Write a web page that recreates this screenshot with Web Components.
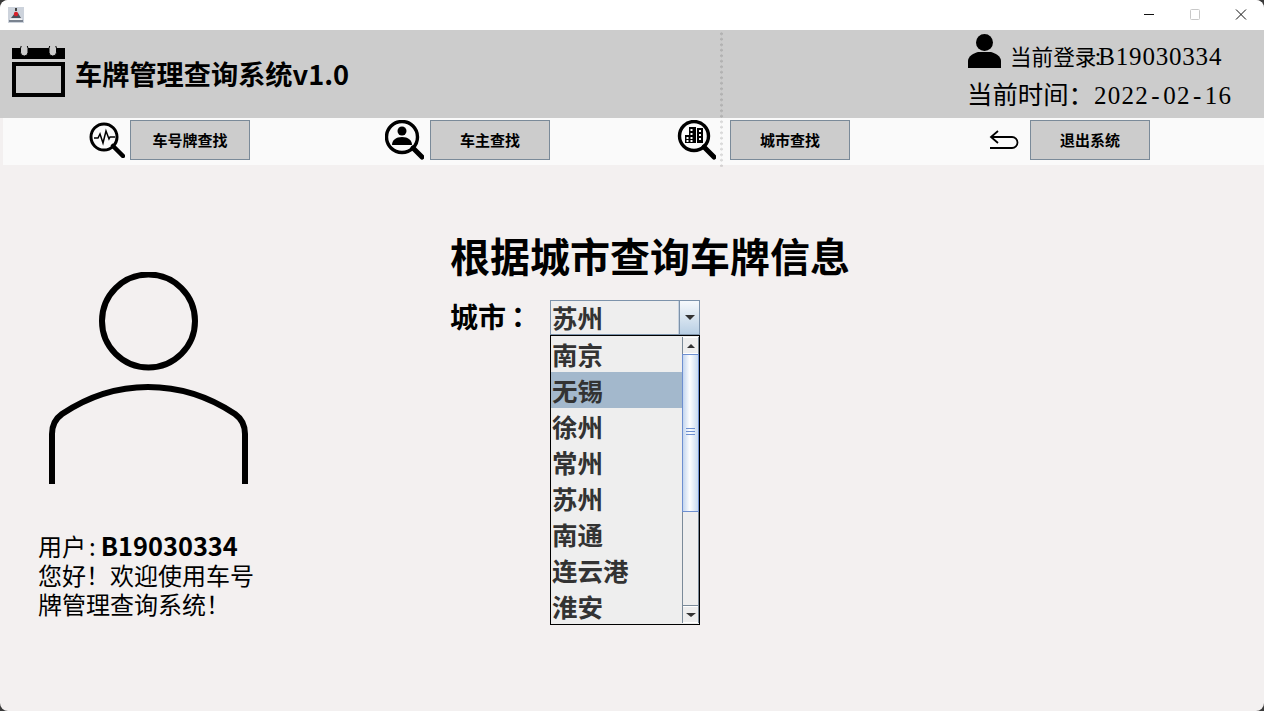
<!DOCTYPE html>
<html lang="zh">
<head>
<meta charset="utf-8">
<style>
  html, body { margin: 0; height: 100%; background: #3a3a3a; }
  body { font-family: "Noto Sans CJK SC", sans-serif; overflow: hidden; }
  plate-app { height: 711px; }
</style>
</head>
<body>
<plate-app></plate-app>
<script>
class TitleBar extends HTMLElement {
  connectedCallback() {
    this.attachShadow({ mode: 'open' });
    this.shadowRoot.innerHTML = `
      <style>
        :host { display: flex; align-items: center; justify-content: space-between; height: 30px; background: #fff; border-radius: 8px 8px 0 0; }
        .app { margin-left: 8px; display: block; }
        .ctrl { display: flex; }
        .ctrl svg { display: block; width: 46px; height: 30px; }
      </style>
      <svg class="app" width="16" height="16" viewBox="0 0 16 16">
        <rect width="16" height="16" fill="#cdd3dc"/>
        <path d="M1 13h14v2H1z" fill="#7a8390"/>
        <path d="M3 11l4-5h3l3 5z" fill="#4a505c"/>
        <path d="M2 11.500h12v1.500H2z" fill="#f4f4f4"/>
        <circle cx="8" cy="7" r="2.200" fill="#d8202a"/>
        <path d="M7 1h2v3H7z" fill="#444"/>
      </svg>
      <div class="ctrl">
        <svg viewBox="0 0 46 30"><path d="M18 14.500h10" stroke="#111" fill="none"/></svg>
        <svg viewBox="0 0 46 30"><rect x="18.500" y="9.500" width="9" height="10" rx="1" stroke="#c8c8c8" fill="none"/></svg>
        <svg viewBox="0 0 46 30"><path d="M18 9.500l10 10M28 9.500l-10 10" stroke="#111" fill="none"/></svg>
      </div>`;
  }
}

class HeaderBar extends HTMLElement {
  connectedCallback() {
    this.attachShadow({ mode: 'open' });
    this.shadowRoot.innerHTML = `
      <style>
        :host { display: flex; justify-content: space-between; height: 88px; background: #cccccc; color: #000; }
        .brand { display: flex; align-items: center; gap: 10px; padding-left: 12px; }
        .brand svg { display: block; margin-top: -8px; }
        h1 { margin: -2px 0 0; font-size: 27.200px; font-weight: 700; line-height: 36px; }
        .who { display: flex; flex-direction: column; padding: 2px 32px 0 0; width: 265px; }
        .login { display: flex; align-items: center; height: 46px; gap: 9px; font-size: 21.600px; white-space: nowrap; }
        .login svg { display: block; margin: -8px 0 0 1px; }
        .time { font-size: 25.400px; line-height: 30px; white-space: nowrap; }
        .num { font-family: "Liberation Serif", serif; letter-spacing: 1.300px; font-size: 25px; }
        .login .num { letter-spacing: .8px; }
        .login .c { letter-spacing: -3px; margin-left: -2px; }
        .dash { margin: 0 2.200px; }
      </style>
      <div class="brand">
        <svg width="53" height="53" viewBox="0 0 53 53">
          <path d="M0 4h53v11H0z" fill="#000"/>
          <rect x="8.500" y="0.500" width="7.500" height="11.500" rx="3.700" fill="#ccc" stroke="#000"/>
          <rect x="37" y="0.500" width="7.500" height="11.500" rx="3.700" fill="#ccc" stroke="#000"/>
          <path d="M8.500 0h7.500v2h-7.500zM37 0h7.500v2H37z" fill="#ccc"/>
          <rect x="2" y="20" width="49" height="31" fill="none" stroke="#000" stroke-width="4"/>
        </svg>
        <h1>车牌管理查询系统v1.0</h1>
      </div>
      <div class="who">
        <div class="login">
          <svg width="33" height="34" viewBox="0 0 33 34">
            <circle cx="16.500" cy="8.500" r="8.500" fill="#000"/>
            <path d="M0 34v-7c0-5 6-8 10-9h13c4 1 10 4 10 9v7z" fill="#000"/>
          </svg>
          <span>当前登录<span class="num"><span class="c">:</span>B19030334</span></span>
        </div>
        <div class="time">当前时间&#xFF1A;<span class="num">2022<span class="dash">-</span>02<span class="dash">-</span>16</span></div>
      </div>`;
  }
}

class ToolButton extends HTMLElement {
  connectedCallback() {
    this.attachShadow({ mode: 'open' });
    this.shadowRoot.innerHTML = `
      <style>
        :host { display: flex; justify-content: flex-end; align-items: center; gap: var(--icon-gap, 5px); }
        button {
          width: 120px; height: 40px; padding: 0 0 2px; background: #cccccc; color: #000;
          border: 1px solid #7a8a99; font: 700 15px "Noto Sans CJK SC", sans-serif;
        }
        ::slotted(svg) { display: block; }
      </style>
      <slot name="icon"></slot>
      <button><slot></slot></button>`;
  }
}

class ToolBar extends HTMLElement {
  connectedCallback() {
    this.attachShadow({ mode: 'open' });
    this.shadowRoot.innerHTML = `
      <style>
        :host {
          display: grid; grid-template-columns: 247px 300px 300px 300px; align-items: center;
          height: 47px; margin-left: 3px; padding-bottom: 3px; box-sizing: border-box; background: #fafafa;
        }
      </style>
      <slot></slot>`;
  }
}

class UserCard extends HTMLElement {
  connectedCallback() {
    this.attachShadow({ mode: 'open' });
    this.shadowRoot.innerHTML = `
      <style>
        :host { display: block; width: 450px; flex: none; padding: 107px 0 0 38px; box-sizing: border-box; color: #000; }
        svg { display: block; margin-left: 11px; }
        p { margin: 47px 0 0; width: 220px; font-size: 24px; line-height: 29px; }
        b { font-weight: 700; font-size: 25.400px; }
        .sep { margin: 0 5px 0 3px; }
      </style>
      <svg width="200" height="212" viewBox="0 0 200 212">
        <circle cx="99.500" cy="49" r="46.500" fill="none" stroke="#000" stroke-width="6"/>
        <path d="M3 212v-50c0-9 3-15 10-20 27-18 56-27 86-27s60 9 87 27c7 5 10 11 10 20v50" fill="none" stroke="#000" stroke-width="6"/>
      </svg>
      <p>用户<span class="sep">:</span><b>B19030334</b><br>您好&#xFF01;欢迎使用车号牌管理查询系统&#xFF01;</p>`;
  }
}

class CityCombo extends HTMLElement {
  connectedCallback() {
    this.attachShadow({ mode: 'open' });
    const cities = ['南京', '无锡', '徐州', '常州', '苏州', '南通', '连云港', '淮安'];
    this.shadowRoot.innerHTML = `
      <style>
        :host { display: block; position: relative; width: 150px; height: 35px; color: #333; font-size: 25.500px; font-weight: 700; }
        .box {
          display: flex; height: 35px; box-sizing: border-box; border: 1px solid #7d93ab; background: #eeeeee;
        }
        .val { flex: 1; line-height: 31px; padding-left: 1px; border-right: 1px solid #c6d2df; }
        .arrow {
          width: 19px; display: flex; align-items: center; justify-content: center;
          border-left: 1px solid #7d93ab; background: linear-gradient(#f6f9fc, #b9cfe4);
        }
        .tri { width: 0; height: 0; border: 5px solid transparent; border-top: 5px solid #333; border-bottom: 0; }
        .pop {
          position: absolute; left: 0; top: 35px; width: 150px; height: 290px; box-sizing: border-box;
          border: 1px solid #000; background: #eeeeee; display: flex;
        }
        ul { flex: 1; margin: 0; padding: 0; list-style: none; }
        li { height: 36px; line-height: 35px; padding-left: 1px; white-space: nowrap; }
        li.sel { background: #a3b8cc; }
        .bar { width: 15px; margin: 1px 0 1px 0; display: flex; flex-direction: column; border-left: 1px solid #7a8a99; border-right: 1px solid #7a8a99; }
        .btn { height: 15px; flex: none; display: flex; align-items: center; justify-content: center; background: #eeeeee; border: 1px solid #fff; border-width: 1px 0; }
        .up { width: 0; height: 0; border: 4px solid transparent; border-bottom: 4px solid #333; border-top: 0; }
        .dn { width: 0; height: 0; border: 5px solid transparent; border-top: 4px solid #333; border-bottom: 0; }
        .thumb {
          height: 158px; flex: none; box-sizing: border-box; border: 1px solid #6d8fd0;
          background: linear-gradient(90deg, #c4d6ef, #fdfeff 45%, #c8daf0); display: flex; align-items: center; justify-content: center;
          margin: 0 -1px;
        }
        .grip { width: 9px; height: 5px; margin-bottom: 4px; border-top: 1px solid #6d8fd0; border-bottom: 1px solid #6d8fd0; }
        .grip::after { content: ""; display: block; margin-top: 2px; height: 1px; background: #6d8fd0; }
        .track { flex: 1; border-bottom: 1px solid #7a8a99; }
      </style>
      <div class="box">
        <div class="val">苏州</div>
        <div class="arrow"><div class="tri"></div></div>
      </div>
      <div class="pop">
        <ul>${cities.map((c, i) => `<li class="${i == 1 ? 'sel' : ''}">${c}</li>`).join('')}</ul>
        <div class="bar">
          <div class="btn"><div class="up"></div></div>
          <div class="thumb"><div class="grip"></div></div>
          <div class="track"></div>
          <div class="btn"><div class="dn"></div></div>
        </div>
      </div>`;
  }
}

class CityQuery extends HTMLElement {
  connectedCallback() {
    this.attachShadow({ mode: 'open' });
    this.shadowRoot.innerHTML = `
      <style>
        :host { display: block; padding-top: 63px; color: #000; }
        h2 { margin: 0; font-size: 40px; font-weight: 700; line-height: 54px; }
        .row { display: flex; margin-top: 18px; }
        label { width: 100px; font-size: 28px; font-weight: 700; line-height: 32px; }
        .colon { font-family: "Noto Sans CJK TC", sans-serif; margin-left: -2px; }
      </style>
      <h2>根据城市查询车牌信息</h2>
      <div class="row">
        <label>城市<span class="colon" lang="zh-TW">&#xFF1A;</span></label>
        <city-combo></city-combo>
      </div>`;
  }
}

class PlateApp extends HTMLElement {
  connectedCallback() {
    this.attachShadow({ mode: 'open' });
    this.shadowRoot.innerHTML = `
      <style>
        :host { display: flex; flex-direction: column; position: relative; background: #f3f0f0; border-radius: 8px; overflow: hidden; }
        .main { flex: 1; display: flex; }
        .dots {
          position: absolute; left: 720px; top: 31px; width: 3px; height: 136px;
          background: radial-gradient(circle, rgba(0,0,0,.13) 1.200px, transparent 1.600px) 0 0 / 3px 5.500px;
        }
      </style>
      <title-bar></title-bar>
      <header-bar></header-bar>
      <tool-bar>
        <tool-button style="--icon-gap:5px">
          <svg slot="icon" width="36" height="36" viewBox="0 0 36 36" fill="none" stroke="#000">
            <circle cx="15" cy="15" r="13" stroke-width="3"/>
            <path d="M24 24l10 10" stroke-width="4.500" stroke-linecap="round"/>
            <path d="M5 16h4l2-4 3 9 3-12 3 8 1-2h5" stroke-width="1.500"/>
          </svg>
          车号牌查找
        </tool-button>
        <tool-button style="--icon-gap:6px">
          <svg slot="icon" width="39" height="40" viewBox="0 0 39 40" fill="none" stroke="#000">
            <circle cx="17" cy="17" r="15.500" stroke-width="3.400"/>
            <path d="M28 28l9 9" stroke-width="5" stroke-linecap="round"/>
            <circle cx="17" cy="11" r="4.500" fill="#000" stroke="none"/>
            <path d="M7 25c0-5 4-8 10-8s10 3 10 8z" fill="#000" stroke="none"/>
          </svg>
          车主查找
        </tool-button>
        <tool-button style="--icon-gap:14px">
          <svg slot="icon" width="39" height="40" viewBox="0 0 39 40" fill="none" stroke="#000">
            <circle cx="17" cy="16" r="14.500" stroke-width="3.400"/>
            <path d="M27 27l10 10" stroke-width="5" stroke-linecap="round"/>
            <path d="M8 15h4v-8h7v8h0v8H8zM20 23V8h6v15z" fill="#000" stroke="none"/>
            <path d="M9.500 17h2v2h-2zM13.500 9h2v2h-2zM13.500 13h2v2h-2zM9.500 20h2v2h-2zM13.500 17h2v2h-2zM13.500 20h2v2h-2zM22 10h2v2h-2zM22 14h2v2h-2zM22 18h2v2h-2z" fill="#fff" stroke="none"/>
          </svg>
          城市查找
        </tool-button>
        <tool-button style="--icon-gap:11px">
          <svg slot="icon" width="30" height="20" viewBox="0 0 30 20" fill="none" stroke="#000" stroke-width="1.800">
            <path d="M9 1L2 7l7 6M2 7h21a5.500 5.500 0 0 1 0 11H1"/>
          </svg>
          退出系统
        </tool-button>
      </tool-bar>
      <div class="main">
        <user-card></user-card>
        <city-query></city-query>
      </div>
      <div class="dots"></div>`;
  }
}

customElements.define('title-bar', TitleBar);
customElements.define('header-bar', HeaderBar);
customElements.define('tool-button', ToolButton);
customElements.define('tool-bar', ToolBar);
customElements.define('user-card', UserCard);
customElements.define('city-combo', CityCombo);
customElements.define('city-query', CityQuery);
customElements.define('plate-app', PlateApp);
</script>
</body>
</html>
